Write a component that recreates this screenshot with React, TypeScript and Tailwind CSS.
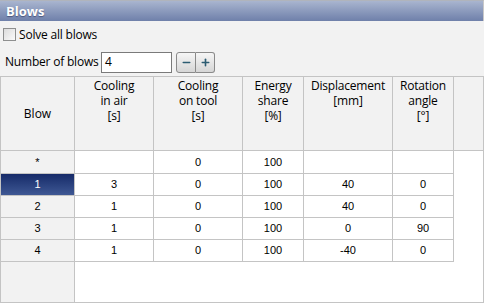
import { Minus, Plus } from 'lucide-react';

const cols = [
  { key: 'air', lines: ['Cooling', 'in air', '[s]'], w: 'w-[79px]' },
  { key: 'tool', lines: ['Cooling', 'on tool', '[s]'], w: 'w-[89px]' },
  { key: 'energy', lines: ['Energy', 'share', '[%]'], w: 'w-[61px]' },
  { key: 'disp', lines: ['Displacement', '[mm]'], w: 'w-[89px]' },
  { key: 'rot', lines: ['Rotation', 'angle', '[°]'], w: 'w-[61px]' },
];

const rows: { label: string; cells: string[]; selected?: boolean }[] = [
  { label: '*', cells: ['', '0', '100', '', ''] },
  { label: '1', cells: ['3', '0', '100', '40', '0'], selected: true },
  { label: '2', cells: ['1', '0', '100', '40', '0'] },
  { label: '3', cells: ['1', '0', '100', '0', '90'] },
  { label: '4', cells: ['1', '0', '100', '-40', '0'] },
];

const ui = "font-['Open_Sans','Noto_Sans',sans-serif]";
const num = "font-['Liberation_Sans',Arial,sans-serif]";

export default function App() {
  return (
    <div className={`w-[484px] h-[303px] bg-[#f2f2f2] flex flex-col overflow-hidden text-black ${ui}`}>
      {/* title bar */}
      <div className="h-[21px] shrink-0 border-t border-[#b0b4bc] border-r border-r-[#c8c8c8] bg-gradient-to-b from-[#a9b5cf] to-[#6f80aa] flex items-center px-[6px]">
        <span className="text-white font-bold text-[13px] leading-none [text-shadow:0_1px_1px_rgba(40,50,90,0.6)]">Blows</span>
      </div>

      {/* solve all */}
      <div className="h-[23px] shrink-0 flex items-center pl-[3px] pt-[4px]">
        <div className="w-[13px] h-[13px] border border-[#8e8f8f] bg-gradient-to-br from-[#dcdcdc] to-[#fafafa] shrink-0" />
        <span className="ml-[3px] text-[12px] leading-none tracking-[-0.2px] whitespace-nowrap">Solve all blows</span>
      </div>

      {/* number of blows */}
      <div className="h-[32px] shrink-0 flex items-center pl-[5px] pt-[4px]">
        <span className="text-[12px] leading-none w-[96px] shrink-0 whitespace-nowrap tracking-[-0.2px]">Number of blows</span>
        <div className="w-[71px] h-[21px] border border-[#7a7a7a] bg-white flex items-center px-[3px] text-[12px]">4</div>
        <div className="ml-[4px] flex">
          <div className="w-[20px] h-[21px] border border-[#8a8a8a] rounded-l-[3px] bg-gradient-to-b from-[#f6f6f6] to-[#d6d6d6] flex items-center justify-center">
            <Minus size={11} strokeWidth={3.5} className="text-[#2c5c72]" />
          </div>
          <div className="w-[19px] h-[21px] border border-l-0 border-[#8a8a8a] rounded-r-[3px] bg-gradient-to-b from-[#f6f6f6] to-[#d6d6d6] flex items-center justify-center">
            <Plus size={11} strokeWidth={3.5} className="text-[#2c5c72]" />
          </div>
        </div>
      </div>

      {/* grid */}
      <div className="flex-1 min-h-0 flex flex-col border border-[#c4c4c4]">
        <div className="flex h-[74px] shrink-0 border-b border-[#c4c4c4] bg-[#f2f2f2]">
          <div className="w-[74px] border-r border-[#c4c4c4] flex items-center justify-center text-[12px]">Blow</div>
          {cols.map((c) => (
            <div key={c.key} className={`${c.w} border-r border-[#c4c4c4] flex flex-col items-center pt-[1px] text-[12px] leading-[15px] tracking-[-0.2px]`}>
              {c.lines.map((l) => (
                <span key={l} className="block h-[15px]">{l}</span>
              ))}
            </div>
          ))}
          <div className="flex-1" />
        </div>

        {rows.map((r, i) => (
          <div key={r.label} className={`flex shrink-0 ${i === 0 ? 'h-[23px]' : 'h-[22px]'}`}>
            <div
              className={`w-[74px] border-r border-b border-[#c4c4c4] flex items-center justify-center text-[11px] ${num} ${
                r.selected ? 'bg-gradient-to-b from-[#172b69] to-[#3f5894] text-white' : 'bg-[#f2f2f2]'
              }`}
            >
              {r.label}
            </div>
            {cols.map((c, j) => (
              <div
                key={c.key}
                className={`${c.w} border-r border-b border-[#c4c4c4] bg-white flex items-center justify-center text-[11px] ${num}`}
              >
                {r.cells[j]}
              </div>
            ))}
            <div className="flex-1 bg-white" />
          </div>
        ))}

        <div className="flex flex-1">
          <div className="w-[74px] border-r border-[#c4c4c4] bg-[#f2f2f2]" />
          <div className="flex-1 bg-white" />
        </div>
      </div>
    </div>
  );
}
